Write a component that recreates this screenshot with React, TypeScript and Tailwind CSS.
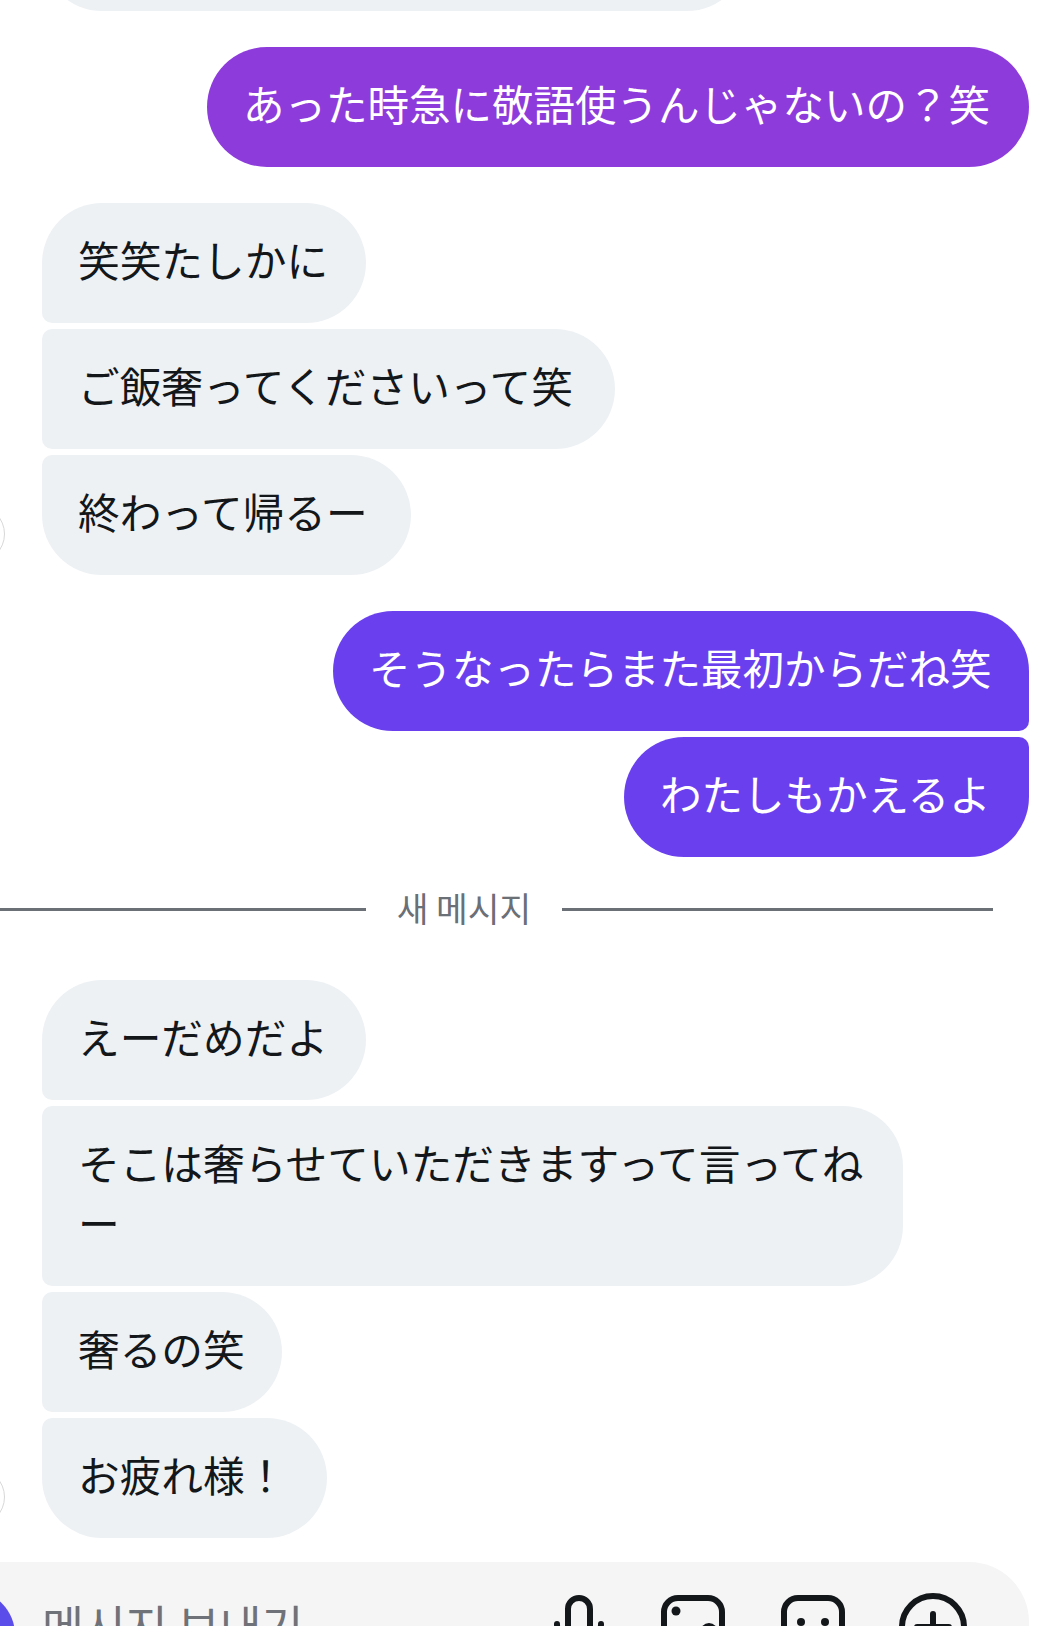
const cjk = { fontFamily: '"Noto Sans CJK JP", "Noto Sans", sans-serif' };

function Received({ text, shape, width }: { text: string; shape: string; width: string }) {
  return (
    <div className={`self-start bg-[#eef1f4] text-[#14171a] text-[41.7px] leading-[60px] pl-[36px] pr-[28px] pt-[26px] pb-[34px] ${shape} ${width}`}>
      {text}
    </div>
  );
}

function Sent({ text, shape, width, color }: { text: string; shape: string; width: string; color: string }) {
  return (
    <div className={`self-end text-white text-[41.5px] leading-[60px] pl-[36px] pr-[20px] pt-[26px] pb-[34px] whitespace-nowrap ${shape} ${width} ${color}`}>
      {text}
    </div>
  );
}

function Avatar() {
  return <div className="absolute left-[-95px] bottom-[12px] w-[58px] h-[58px] rounded-full border border-[#d8d8d8] bg-white" />;
}

export default function App() {
  return (
    <div className="w-[1053px] h-[1626px] bg-white overflow-hidden relative" style={cjk}>
      <div className="flex flex-col pl-[42px] pr-[24px] mt-[-109px]">
        <div className="self-start w-[705px] h-[120px] rounded-[60px] bg-[#eef1f4]" />

        <div className="mt-[36px] self-end">
          <Sent text="あった時急に敬語使うんじゃないの？笑" shape="rounded-[60px]" width="w-[822px]" color="bg-[#8e3bdc]" />
        </div>

        <div className="mt-[36px] flex flex-col gap-[6px] relative">
          <Received text="笑笑たしかに" shape="rounded-t-[60px] rounded-br-[60px] rounded-bl-[10px]" width="w-[324px]" />
          <Received text="ご飯奢ってくださいって笑" shape="rounded-r-[60px] rounded-l-[10px]" width="w-[573px]" />
          <Received text="終わって帰るー" shape="rounded-r-[60px] rounded-b-[60px] rounded-tl-[10px]" width="w-[369px]" />
          <Avatar />
        </div>

        <div className="mt-[36px] flex flex-col gap-[6px]">
          <Sent text="そうなったらまた最初からだね笑" shape="rounded-t-[60px] rounded-bl-[60px] rounded-br-[10px]" width="w-[696px]" color="bg-[#6a40ee]" />
          <Sent text="わたしもかえるよ" shape="rounded-l-[60px] rounded-b-[60px] rounded-tr-[10px]" width="w-[405px]" color="bg-[#6a40ee]" />
        </div>

        <div className="ml-[-42px] mt-[29px] mb-[48px] flex items-center h-[46px]">
          <div className="w-[366px] h-[3px] bg-[#6b6f76]" />
          <div className="w-[196px] text-center text-[34.5px] leading-[46px] pb-[4px] text-[#6b6f76]">새 메시지</div>
          <div className="w-[431px] h-[3px] bg-[#6b6f76]" />
        </div>

        <div className="flex flex-col gap-[6px] relative">
          <Received text="えーだめだよ" shape="rounded-t-[60px] rounded-br-[60px] rounded-bl-[10px]" width="w-[324px]" />
          <Received
            text="そこは奢らせていただきますって言ってねー"
            shape="rounded-r-[60px] rounded-l-[10px]"
            width="w-[861px]"
          />
          <Received text="奢るの笑" shape="rounded-r-[60px] rounded-l-[10px]" width="w-[240px]" />
          <Received text="お疲れ様！" shape="rounded-r-[60px] rounded-b-[60px] rounded-tl-[10px]" width="w-[285px]" />
          <Avatar />
        </div>
      </div>

      <div className="absolute left-0 top-[1562px] w-[1029px] h-[120px] rounded-tr-[60px] bg-[#f5f5f6] overflow-hidden">
        <div className="absolute left-[-75px] top-[28px] w-[90px] h-[90px] rounded-full bg-[#5b4dea]" />
        <div className="absolute left-[42px] top-[32px] text-[45.5px] leading-[60px] text-[#6f7278] whitespace-nowrap">메시지 보내기</div>
        <div className="absolute top-[28px] left-[552px] flex text-[#14171a]">
          <svg className="w-[54px] h-[80px]" viewBox="0 0 54 80" fill="none" stroke="currentColor" strokeWidth="6" strokeLinecap="round">
            <rect x="16" y="8" width="22" height="40" rx="11" />
            <path d="M5 34a22 22 0 0 0 44 0" />
          </svg>
          <svg className="w-[70px] h-[80px] ml-[52px]" viewBox="0 0 70 80" fill="none" stroke="currentColor" strokeWidth="6">
            <rect x="6" y="8" width="58" height="60" rx="14" />
            <circle cx="18" cy="21" r="4.5" fill="currentColor" stroke="none" />
            <circle cx="51" cy="42" r="6" />
          </svg>
          <svg className="w-[70px] h-[80px] ml-[50px]" viewBox="0 0 70 80" fill="none" stroke="currentColor" strokeWidth="6">
            <rect x="6" y="8" width="58" height="60" rx="14" />
            <circle cx="23" cy="32" r="4" fill="currentColor" stroke="none" />
            <circle cx="47" cy="32" r="4" fill="currentColor" stroke="none" />
          </svg>
          <svg className="w-[74px] h-[80px] ml-[48px]" viewBox="0 0 74 80" fill="none" stroke="currentColor" strokeWidth="6" strokeLinecap="round">
            <circle cx="37" cy="37" r="31" />
            <path d="M37 24v26M21 37h32" />
          </svg>
        </div>
      </div>
    </div>
  );
}
